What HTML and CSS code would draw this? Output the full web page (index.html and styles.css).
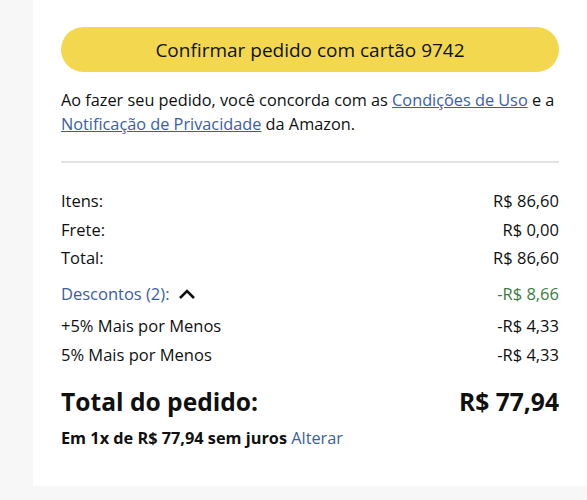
FILE: index.html
```html
<!DOCTYPE html>
<html lang="pt-BR">

<head>
    <meta charset="UTF-8">
    <meta name="viewport" content="width=device-width, initial-scale=1.0">
    <title>Resumo do pedido</title>
    <link rel="stylesheet" href="styles.css">
</head>

<body>
    <div class="card">
        <button class="place-order">Confirmar pedido com cartão 9742</button>

        <p class="terms">
            Ao fazer seu pedido, você concorda com as <a href="#">Condições de Uso</a> e a
            <a href="#">Notificação de Privacidade</a> da Amazon.
        </p>

        <hr class="divider">

        <div class="summary">
            <div class="row"><span>Itens:</span><span>R$ 86,60</span></div>
            <div class="row"><span>Frete:</span><span>R$ 0,00</span></div>
            <div class="row"><span>Total:</span><span>R$ 86,60</span></div>
            <div class="row discounts">
                <span class="toggle">Descontos (2):
                    <svg class="chevron" width="18" height="12" viewBox="0 0 18 12">
                        <path d="M2 10 L9 3 L16 10" fill="none" stroke="#111" stroke-width="2.6"/>
                    </svg>
                </span>
                <span class="saving">-R$ 8,66</span>
            </div>
            <div class="row"><span>+5% Mais por Menos</span><span>-R$ 4,33</span></div>
            <div class="row"><span>5% Mais por Menos</span><span>-R$ 4,33</span></div>
        </div>

        <div class="grand-total">
            <span>Total do pedido:</span>
            <span>R$ 77,94</span>
        </div>
        <p class="installments"><b>Em 1x de R$ 77,94 sem juros</b> <a href="#">Alterar</a></p>
    </div>
</body>

</html>
```

FILE: styles.css
```css
body {
    font-family: "Open Sans", "Noto Sans", Arial, sans-serif;
    background-color: #f7f7f7;
    color: #0f1111;
    margin: 0;
    padding: 0 0 14px 33px;
}

.card {
    background: white;
    padding: 27px 28px 37px 28px;
    width: 498px;
}

.place-order {
    display: block;
    width: 100%;
    height: 45px;
    background-color: #f3d84f;
    border: none;
    border-radius: 23px;
    font-family: inherit;
    font-size: 19px;
    color: #0f1111;
    cursor: pointer;
}

.terms {
    margin: 16px 0 0;
    font-size: 16.3px;
    line-height: 24px;
}

a {
    color: #3a5ea5;
}

.divider {
    margin: 25px 0 0;
    border: none;
    border-top: 2px solid #e3e3e3;
}

.summary {
    margin-top: 24px;
}

.row {
    display: flex;
    justify-content: space-between;
    font-size: 16.5px;
    line-height: 28.5px;
}

.discounts {
    margin: 7.5px 0 3.5px;
}

.toggle {
    color: #3a5ea5;
    display: flex;
    align-items: center;
    gap: 8px;
}

.saving {
    color: #3b7d3f;
}

.grand-total {
    display: flex;
    justify-content: space-between;
    margin-top: 16px;
    font-size: 24.6px;
    font-weight: bold;
    line-height: 34px;
}

.installments {
    margin: 8px 0 0;
    font-size: 16.3px;
    line-height: 22px;
}

.installments a {
    text-decoration: none;
}
```
